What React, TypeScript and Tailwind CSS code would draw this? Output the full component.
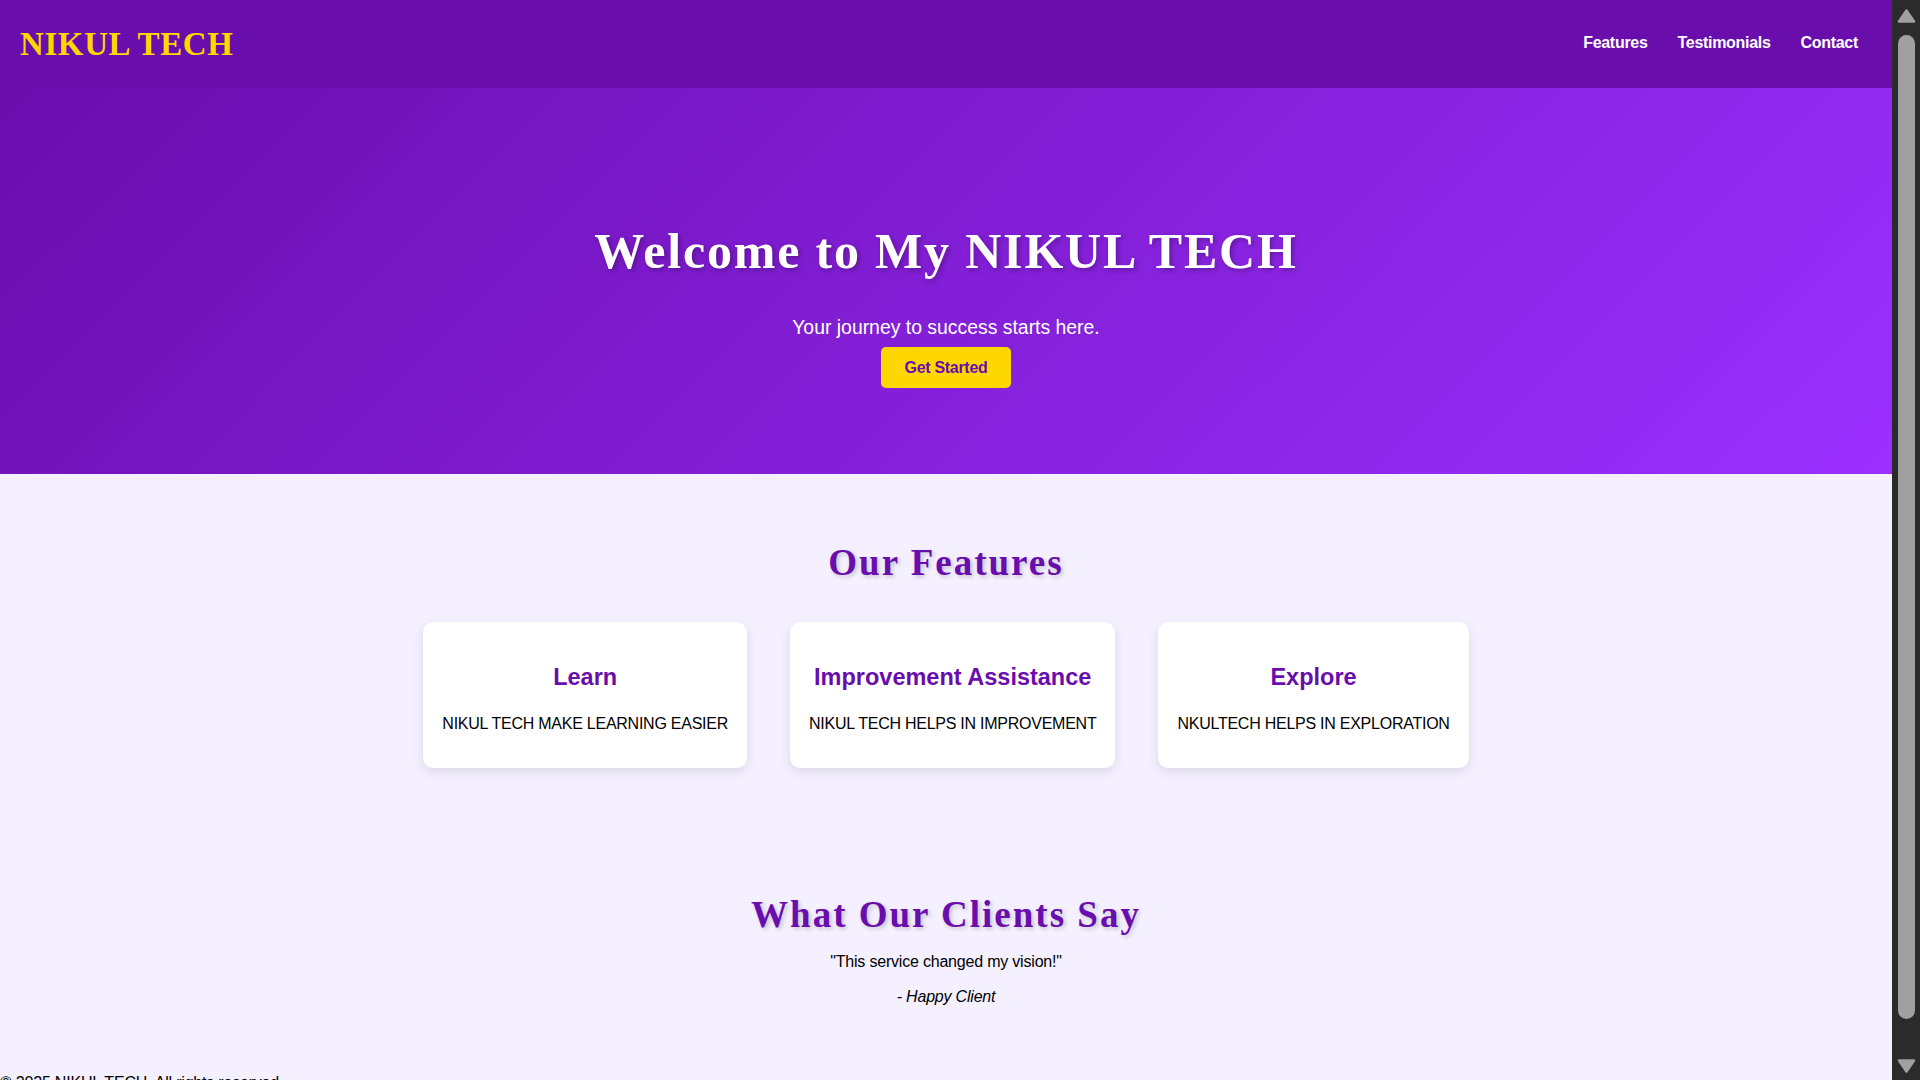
import React from "react";

const serif = "font-['Liberation_Serif',Georgia,serif]";
const sans = "font-['Liberation_Sans',Arial,sans-serif]";

function ArrowUp() {
  return (
    <svg width="19" height="14" viewBox="0 0 19 14" className="block">
      <polygon points="2,12.5 9.5,1.5 17,12.5" fill="#a0a0a0" stroke="#a0a0a0" strokeWidth="2.5" strokeLinejoin="round" />
    </svg>
  );
}

function ArrowDown() {
  return (
    <svg width="19" height="14" viewBox="0 0 19 14" className="block">
      <polygon points="2,1.5 17,1.5 9.5,12.5" fill="#a0a0a0" stroke="#a0a0a0" strokeWidth="2.5" strokeLinejoin="round" />
    </svg>
  );
}

const features = [
  { title: "Learn", text: "NIKUL TECH MAKE LEARNING EASIER" },
  { title: "Improvement Assistance", text: "NIKUL TECH HELPS IN IMPROVEMENT" },
  { title: "Explore", text: "NKULTECH HELPS IN EXPLORATION" },
];

export default function App() {
  return (
    <div className={`flex h-screen w-full overflow-hidden bg-[#f4f0ff] ${sans}`}>
      <main className="flex-1 h-screen overflow-hidden bg-[#f4f0ff]">
        <header className="h-[88px] bg-[#6a0dad] flex items-center justify-between pl-[20px] pr-[34px]">
          <div className={`${serif} text-[33px] leading-[40px] font-bold tracking-[0.6px] text-[#ffd700]`}>
            NIKUL TECH
          </div>
          <nav className="flex gap-[30px] mb-[3px]">
            {["Features", "Testimonials", "Contact"].map((n) => (
              <a key={n} href="#" className="text-white font-bold text-[16px] leading-[20px] tracking-[-0.3px]">
                {n}
              </a>
            ))}
          </nav>
        </header>

        <section className="h-[386px] bg-[linear-gradient(135deg,#6a0dad,#9b30ff)] flex flex-col items-center pt-[135px]">
          <h1 className={`${serif} text-white font-bold text-[50px] leading-[56px] tracking-[1.8px] [text-shadow:2px_2px_5px_rgba(0,0,0,0.3)]`}>
            Welcome to My NIKUL TECH
          </h1>
          <p className="mt-[37px] text-white text-[19.4px] leading-[22px]">
            Your journey to success starts here.
          </p>
          <button className="mt-[9px] h-[41px] px-[24px] rounded-[5px] bg-[#ffd700] text-[#6a0dad] font-bold text-[16px] tracking-[-0.3px]">
            Get Started
          </button>
        </section>

        <section className="pt-[67px] pb-[62px] flex flex-col items-center">
          <h2 className={`${serif} text-[#6a0dad] font-bold text-[37px] leading-[44px] tracking-[2px] [text-shadow:2px_2px_4px_rgba(0,0,0,0.2)]`}>
            Our Features
          </h2>
          <div className="mt-[37px] flex justify-center gap-[43px]">
            {features.map((f) => (
              <div
                key={f.title}
                className="bg-white rounded-[10px] shadow-[0_4px_12px_rgba(0,0,0,0.1)] px-[19px] pt-[41px] pb-[34px] text-center"
              >
                <h3 className="text-[#6a0dad] font-bold text-[23.5px] leading-[28px]">{f.title}</h3>
                <p className="mt-[23px] text-black text-[16px] leading-[20px] tracking-[-0.25px] whitespace-nowrap">{f.text}</p>
              </div>
            ))}
          </div>
        </section>

        <section className="pt-[63px] pb-[66px] flex flex-col items-center">
          <h2 className={`${serif} text-[#6a0dad] font-bold text-[37px] leading-[44px] tracking-[2px] [text-shadow:2px_2px_4px_rgba(0,0,0,0.2)]`}>
            What Our Clients Say
          </h2>
          <p className="mt-[15px] text-black text-[16px] leading-[20px] tracking-[-0.2px]">
            "This service changed my vision!"
          </p>
          <p className="mt-[15px] text-black text-[16px] leading-[20px] tracking-[-0.2px] italic">- Happy Client</p>
        </section>

        <footer className="pb-[20px]">
          <p className="text-black text-[16px] leading-[20px] tracking-[-0.2px]">© 2025 NIKUL TECH. All rights reserved.</p>
        </footer>
      </main>

      <div className="w-[28px] h-screen bg-[#2b2b2b] flex flex-col items-center shrink-0">
        <div className="mt-[9px]">
          <ArrowUp />
        </div>
        <div className="mt-[12px] w-[17px] h-[984px] rounded-full bg-[#a0a0a0] ml-[1px]" />
        <div className="mt-[40px]">
          <ArrowDown />
        </div>
      </div>
    </div>
  );
}
